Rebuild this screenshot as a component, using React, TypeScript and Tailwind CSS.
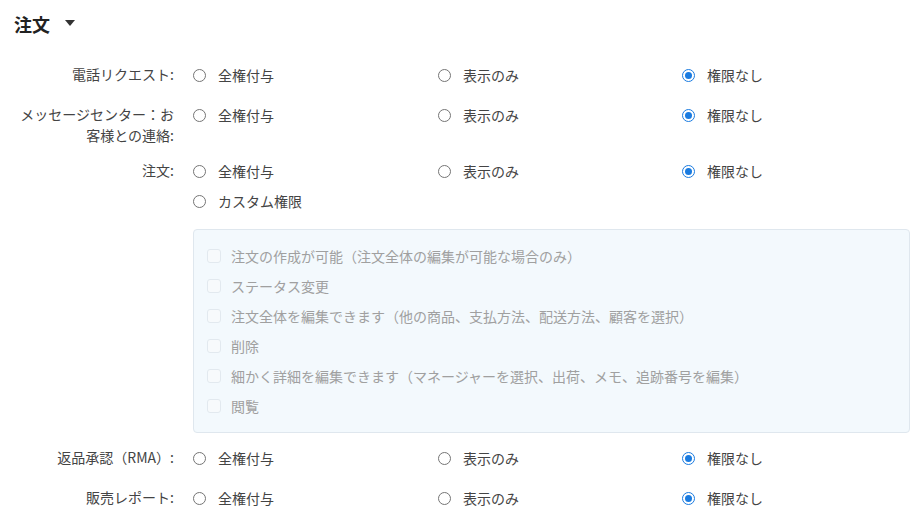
import React from "react";

const FONT = { fontFamily: '"Noto Sans CJK JP", "Noto Sans", sans-serif' };

function Radio({ checked, label }: { checked?: boolean; label: string }) {
  return (
    <div className="flex h-[30px] items-center">
      {checked ? (
        <span className="flex h-[13px] w-[13px] items-center justify-center rounded-full border-[1.5px] border-[#1a7be0] bg-white">
          <span className="h-[7px] w-[7px] rounded-full bg-[#1a7be0]" />
        </span>
      ) : (
        <span className="h-[13px] w-[13px] rounded-full border border-[#757575] bg-white" />
      )}
      <span className="ml-[12px] text-[14px] leading-[21px] text-[#444]">{label}</span>
    </div>
  );
}

function Check({ label }: { label: string }) {
  return (
    <div className="flex h-[30px] items-center">
      <span className="h-[14px] w-[14px] rounded-[3px] border border-[#e2e9ef] bg-[#f7fafc]" />
      <span className="ml-[10px] text-[14px] leading-[21px] text-[#a0a0a0]">{label}</span>
    </div>
  );
}

function Row({
  label,
  custom,
  children,
}: {
  label: React.ReactNode;
  custom?: boolean;
  children?: React.ReactNode;
}) {
  return (
    <div className="flex">
      <div className="w-[160px] shrink-0 pt-[4px] text-right text-[14px] leading-[21px] text-[#444]">
        {label}
      </div>
      <div className="ml-[19px] grid flex-1 grid-cols-[245px_244px_1fr]">
        <Radio label="全権付与" />
        <Radio label="表示のみ" />
        <Radio checked label="権限なし" />
        {custom && <Radio label="カスタム権限" />}
        {children}
      </div>
    </div>
  );
}

export default function App() {
  const checks = [
    "注文の作成が可能（注文全体の編集が可能な場合のみ）",
    "ステータス変更",
    "注文全体を編集できます（他の商品、支払方法、配送方法、顧客を選択）",
    "削除",
    "細かく詳細を編集できます（マネージャーを選択、出荷、メモ、追跡番号を編集）",
    "閲覧",
  ];
  return (
    <div className="h-[520px] w-[924px] overflow-hidden bg-white px-[14px]" style={FONT}>
      <div className="flex h-[48px] items-center">
        <span className="text-[18px] font-bold leading-[24px] text-[#222]">注文</span>
        <svg className="ml-[15px] mt-[-2px]" width="10" height="6" viewBox="0 0 10 6">
          <path d="M0 0 L10 0 L5 6 Z" fill="#333" />
        </svg>
      </div>
      <div className="mt-[12px] flex flex-col gap-[10px]">
        <Row label="電話リクエスト:" />
        <Row label="メッセージセンター：お客様との連絡:" />
        <Row label="注文:" custom>
          <div className="col-span-3 mt-[13px] rounded-[4px] border border-[#dfe7ee] bg-[#f3f9fd] px-[13px] py-[11px]">
            {checks.map((c) => (
              <Check key={c} label={c} />
            ))}
          </div>
        </Row>
        <Row label="返品承認（RMA）:" />
        <Row label="販売レポート:" />
      </div>
    </div>
  );
}
